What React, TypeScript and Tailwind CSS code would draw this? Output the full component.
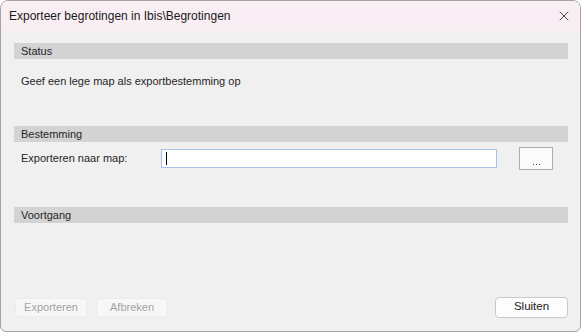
import { X } from "lucide-react";

const font = { fontFamily: '"Liberation Sans", Arial, sans-serif' };

function SectionHeader({ title }: { title: string }) {
  return (
    <div className="h-[16px] bg-[#d3d3d3] pl-[7px] text-[11px] leading-[16px] text-[#262626]">
      {title}
    </div>
  );
}

export default function App() {
  return (
    <div
      className="w-[581px] h-[332px] flex flex-col overflow-hidden rounded-t-[8px] rounded-b-[6px] border border-[#a3a3a3] bg-[#f0f0f0]"
      style={font}
    >
      <div className="h-[30px] shrink-0 flex items-center justify-between bg-[#f9eef4] pl-[8px] pr-[8px]">
        <span className="text-[12px] text-[#1a1a1a]">Exporteer begrotingen in Ibis\Begrotingen</span>
        <X size={16} strokeWidth={1.2} className="text-[#1a1a1a]" />
      </div>

      <div className="flex-1 flex flex-col pl-[13px] pr-[12px] pt-[12px]">
        <SectionHeader title="Status" />
        <div className="h-[44px] flex items-center pl-[7px] text-[11px] text-[#262626]">
          Geef een lege map als exportbestemming op
        </div>
        <div className="h-[23px]" />
        <SectionHeader title="Bestemming" />
        <div className="flex items-center h-[29px] mt-[2px]">
          <span className="w-[147px] pl-[7px] text-[11px] text-[#262626]">Exporteren naar map:</span>
          <div className="w-[336px] h-[19px] bg-white border border-[#a8c3e6] flex items-center pl-[4px]">
            <div className="w-px h-[13px] bg-black" />
          </div>
          <button className="ml-[22px] w-[34px] h-[23px] bg-[#fbfbfb] border border-[#adadad] flex items-end justify-center pb-[4px] gap-[2px]">
            <span className="w-px h-px bg-[#7a3b3b]" />
            <span className="w-px h-px bg-[#3b4a8a]" />
            <span className="w-px h-px bg-[#3b4a8a]" />
          </button>
        </div>
        <div className="h-[34px]" />
        <SectionHeader title="Voortgang" />
        <div className="flex-1" />
        <div className="flex items-center h-[22px] mb-[13px]">
          <button className="w-[72px] h-[19px] ml-[1px] rounded-[3px] bg-[#f7f7f7] border border-[#ececec] text-[11px] text-[#a3a3a3]">
            Exporteren
          </button>
          <button className="w-[72px] h-[19px] ml-[9px] rounded-[3px] bg-[#f7f7f7] border border-[#ececec] text-[11px] text-[#a3a3a3]">
            Afbreken
          </button>
          <div className="flex-1" />
          <button className="w-[73px] h-[21px] rounded-[4px] bg-[#fdfdfd] border border-[#c8c8c8] text-[11.5px] text-[#1a1a1a]">
            Sluiten
          </button>
        </div>
      </div>
    </div>
  );
}
